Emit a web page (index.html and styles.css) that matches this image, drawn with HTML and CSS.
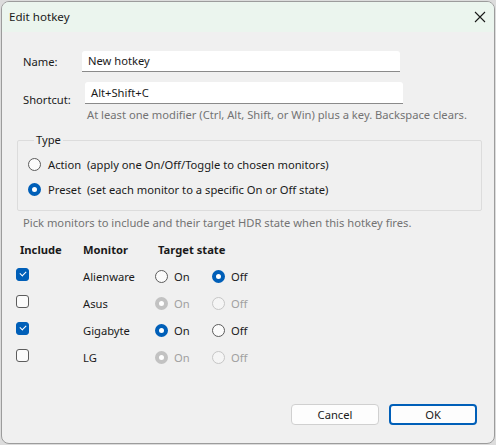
FILE: index.html
```html
<!DOCTYPE html>
<html lang="en">
<head>
  <meta charset="UTF-8">
  <title>Edit hotkey</title>
  <link rel="stylesheet" href="styles.css">
</head>
<body>
  <div class="window">
    <div class="titlebar">
      <span class="title">Edit hotkey</span>
      <svg class="close" width="12" height="12" viewBox="0 0 12 12">
        <path d="M1 1 L11 11 M11 1 L1 11" stroke="#1a1a1a" stroke-width="1.1" fill="none"/>
      </svg>
    </div>

    <div class="content">
      <div class="field name-field">
        <label class="field-label">Name:</label>
        <div class="textbox">New hotkey</div>
      </div>

      <div class="field shortcut-field">
        <label class="field-label">Shortcut:</label>
        <div class="field-body">
          <div class="textbox">Alt+Shift+C</div>
          <p class="hint shortcut-hint">At least one modifier (Ctrl, Alt, Shift, or Win) plus a key. Backspace clears.</p>
        </div>
      </div>

      <fieldset class="group">
        <legend>Type</legend>
        <div class="option"><span class="radio"></span>Action&nbsp; (apply one On/Off/Toggle to chosen monitors)</div>
        <div class="option"><span class="radio checked"></span>Preset&nbsp; (set each monitor to a specific On or Off state)</div>
      </fieldset>

      <p class="hint pick-hint">Pick monitors to include and their target HDR state when this hotkey fires.</p>

      <div class="monitors">
        <div class="head include-head">Include</div>
        <div class="head">Monitor</div>
        <div class="head state-head">Target state</div>

        <div class="cell"><span class="check checked"></span></div>
        <div class="cell">Alienware</div>
        <div class="cell"><span class="radio"></span>On</div>
        <div class="cell"><span class="radio checked"></span>Off</div>

        <div class="cell"><span class="check"></span></div>
        <div class="cell">Asus</div>
        <div class="cell disabled"><span class="radio checked"></span>On</div>
        <div class="cell disabled"><span class="radio"></span>Off</div>

        <div class="cell"><span class="check checked"></span></div>
        <div class="cell">Gigabyte</div>
        <div class="cell"><span class="radio checked"></span>On</div>
        <div class="cell"><span class="radio"></span>Off</div>

        <div class="cell"><span class="check"></span></div>
        <div class="cell">LG</div>
        <div class="cell disabled"><span class="radio checked"></span>On</div>
        <div class="cell disabled"><span class="radio"></span>Off</div>
      </div>

      <div class="buttons">
        <button class="btn">Cancel</button>
        <button class="btn default">OK</button>
      </div>
    </div>
  </div>
</body>
</html>
```

FILE: styles.css
```css
html, body {
  margin: 0;
  background: #dcdcdc;
}

body {
  font-family: "Segoe UI", "Noto Sans", sans-serif;
  font-size: 11.2px;
  line-height: 16px;
  color: #1a1a1a;
  padding: 1px;
}

.window {
  box-sizing: border-box;
  width: 494px;
  height: 443px;
  border: 1px solid #9c9c9c;
  border-radius: 8px;
  background: #f0f0f0;
  overflow: hidden;
  display: flex;
  flex-direction: column;
}

.titlebar {
  height: 30px;
  background: #ebf5ee;
  display: flex;
  align-items: center;
  justify-content: space-between;
  padding: 0 7px 0 7px;
}

.title {
  font-size: 11.6px;
}

.close {
  margin-right: 1px;
}

.content {
  flex: 1;
  display: flex;
  flex-direction: column;
  padding: 0 14px 18px 15px;
}

.field {
  display: flex;
  align-items: center;
}

.field-label {
  padding-left: 6px;
}

.textbox {
  box-sizing: border-box;
  background: #fff;
  border-bottom: 1px solid #8a8a8a;
  border-radius: 3px 3px 0 0;
  padding: 0 6px;
  display: flex;
  align-items: center;
}

.name-field {
  margin-top: 19px;
}

.name-field .field-label {
  width: 59px;
}

.name-field .textbox {
  width: 318px;
  height: 21px;
}

.shortcut-field {
  margin-top: 10px;
  align-items: flex-start;
}

.shortcut-field .field-label {
  width: 62px;
  margin-top: 10px;
}

.shortcut-field .textbox {
  width: 318px;
  height: 22px;
}

.hint {
  margin: 0;
  color: #737373;
}

.shortcut-hint {
  margin-top: 3px;
  padding-left: 2px;
  white-space: nowrap;
}

.group {
  box-sizing: border-box;
  width: 465px;
  height: 79px;
  margin: 9px 0 0 0;
  padding: 4px 0 0 10px;
  border: 1px solid #dcdcdc;
  border-radius: 2px;
}

.group legend {
  padding: 0 2px;
  margin-left: 6px;
}

.option {
  display: flex;
  align-items: center;
  height: 25px;
}

.option .radio {
  margin-right: 7px;
}

.radio {
  box-sizing: border-box;
  display: inline-block;
  width: 13px;
  height: 13px;
  border: 1px solid #5c5c5c;
  border-radius: 50%;
  background: #fbfbfb;
  flex: none;
}

.radio.checked {
  border: 4px solid #005fb8;
  background: #fff;
}

.pick-hint {
  margin-top: 4px;
  padding-left: 6px;
}

.monitors {
  display: grid;
  grid-template-columns: 67px 72px 57px 60px;
  grid-auto-rows: 27px;
  margin: 5px 0 0 -1px;
}

.head {
  font-weight: bold;
  display: flex;
  align-items: center;
}

.include-head {
  padding-left: 4px;
}

.state-head {
  grid-column: span 2;
  padding-left: 3px;
}

.cell {
  display: flex;
  align-items: center;
}

.cell .radio {
  margin-right: 6px;
}

.check {
  box-sizing: border-box;
  display: inline-block;
  width: 13px;
  height: 13px;
  margin-top: -5px;
  border: 1px solid #5c5c5c;
  border-radius: 3px;
  background: #fbfbfb;
  position: relative;
}

.check.checked {
  border-color: #005fb8;
  background: #005fb8;
}

.check.checked::after {
  content: "";
  position: absolute;
  left: 3px;
  top: 2px;
  width: 5px;
  height: 3px;
  border-left: 1px solid #fff;
  border-bottom: 1px solid #fff;
  transform: rotate(-45deg);
}

.disabled {
  color: #a0a0a0;
}

.disabled .radio {
  border-color: #c6c6c6;
  background: #f5f5f5;
}

.disabled .radio.checked {
  border: 4px solid #c2c2c2;
  background: #fff;
}

.buttons {
  margin-top: auto;
  display: flex;
  justify-content: flex-end;
  gap: 10px;
  padding-right: 3px;
}

.btn {
  box-sizing: border-box;
  width: 88px;
  height: 21px;
  font: inherit;
  color: #1a1a1a;
  background: #fdfdfd;
  border: 1px solid #d0d0d0;
  border-radius: 4px;
  padding: 0;
}

.btn.default {
  border: 2px solid #005fb8;
}
```
